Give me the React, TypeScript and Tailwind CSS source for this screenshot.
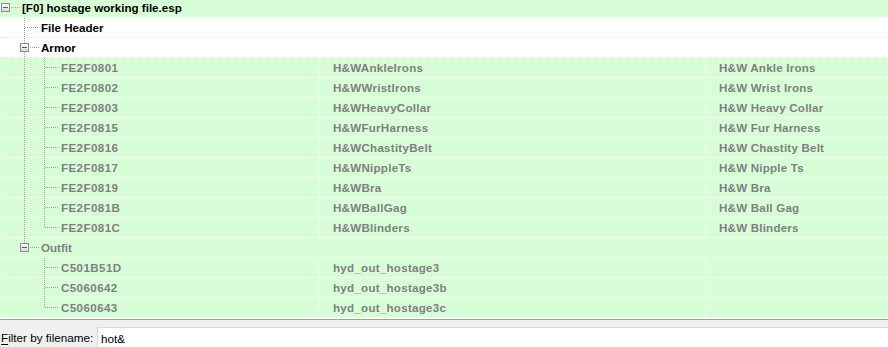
import React from "react";

type Row = {
  depth: 0 | 1 | 2;
  box?: boolean;
  label: string;
  edid?: string;
  full?: string;
  tone: "green" | "white";
  muted?: boolean;
  under?: boolean; // depth-1 line at x=24 continues through this row
  last?: boolean;
};

const rows: Row[] = [
  { depth: 0, box: true, label: "[F0] hostage working file.esp", tone: "green" },
  { depth: 1, label: "File Header", tone: "white" },
  { depth: 1, box: true, label: "Armor", tone: "white" },
  { depth: 2, label: "FE2F0801", edid: "H&WAnkleIrons", full: "H&W Ankle Irons", tone: "green", muted: true, under: true },
  { depth: 2, label: "FE2F0802", edid: "H&WWristIrons", full: "H&W Wrist Irons", tone: "green", muted: true, under: true },
  { depth: 2, label: "FE2F0803", edid: "H&WHeavyCollar", full: "H&W Heavy Collar", tone: "green", muted: true, under: true },
  { depth: 2, label: "FE2F0815", edid: "H&WFurHarness", full: "H&W Fur Harness", tone: "green", muted: true, under: true },
  { depth: 2, label: "FE2F0816", edid: "H&WChastityBelt", full: "H&W Chastity Belt", tone: "green", muted: true, under: true },
  { depth: 2, label: "FE2F0817", edid: "H&WNippleTs", full: "H&W Nipple Ts", tone: "green", muted: true, under: true },
  { depth: 2, label: "FE2F0819", edid: "H&WBra", full: "H&W Bra", tone: "green", muted: true, under: true },
  { depth: 2, label: "FE2F081B", edid: "H&WBallGag", full: "H&W Ball Gag", tone: "green", muted: true, under: true },
  { depth: 2, label: "FE2F081C", edid: "H&WBlinders", full: "H&W Blinders", tone: "green", muted: true, under: true, last: true },
  { depth: 1, box: true, label: "Outfit", tone: "green", muted: true, last: true },
  { depth: 2, label: "C501B51D", edid: "hyd_out_hostage3", tone: "green", muted: true },
  { depth: 2, label: "C5060642", edid: "hyd_out_hostage3b", tone: "green", muted: true },
  { depth: 2, label: "C5060643", edid: "hyd_out_hostage3c", tone: "green", muted: true, last: true },
];

const dot = { stroke: "#a0a0a0", strokeWidth: 1, strokeDasharray: "1 1" };

function Expander({ x }: { x: number }) {
  return (
    <g>
      <rect x={x + 0.5} y={5.5} width={8} height={8} fill="url(#btn)" stroke="#8e8f8f" />
      <line x1={x + 2} y1={9.5} x2={x + 7} y2={9.5} stroke="#3b5a9e" strokeWidth={1} />
    </g>
  );
}

function Guides({ row }: { row: Row }) {
  const w = row.depth === 0 ? 21 : row.depth === 1 ? 40 : 60;
  return (
    <svg width={w} height={19} className="shrink-0">
      <defs>
        <linearGradient id="btn" x1="0" y1="0" x2="0" y2="1">
          <stop offset="0" stopColor="#ffffff" />
          <stop offset="1" stopColor="#d8d8d8" />
        </linearGradient>
      </defs>
      {row.depth === 0 && (
        <>
          <line x1={11} y1={9.5} x2={21} y2={9.5} {...dot} />
          <Expander x={1} />
        </>
      )}
      {row.depth === 1 && (
        <>
          <line x1={24.5} y1={0} x2={24.5} y2={row.last ? 10 : 19} {...dot} />
          <line x1={row.box ? 30 : 25} y1={9.5} x2={39} y2={9.5} {...dot} />
          {row.box && <Expander x={20} />}
        </>
      )}
      {row.depth === 2 && (
        <>
          {row.under && <line x1={24.5} y1={0} x2={24.5} y2={19} {...dot} />}
          <line x1={44.5} y1={0} x2={44.5} y2={row.last ? 10 : 19} {...dot} />
          <line x1={45} y1={9.5} x2={59} y2={9.5} {...dot} />
        </>
      )}
    </svg>
  );
}

function TreeRow({ row }: { row: Row }) {
  const bg = row.tone === "green" ? "bg-[#d7fed7] border-white" : "bg-white border-[#e6e6e6]";
  const color = row.muted ? "text-[#808080]" : "text-black";
  if (row.depth < 2) {
    return (
      <div className={`flex h-[20px] items-center border-b border-dotted ${bg}`}>
        <Guides row={row} />
        <span className={`ml-px whitespace-nowrap font-bold ${color}`}>{row.label}</span>
      </div>
    );
  }
  return (
    <div className={`flex h-[20px] items-stretch border-b border-dotted ${bg}`}>
      <div className="flex w-[319px] shrink-0 items-center">
        <Guides row={row} />
        <span className={`ml-px font-bold tracking-[0.4px] ${color}`}>{row.label}</span>
      </div>
      <div className={`flex w-[386px] shrink-0 items-center border-l border-dotted border-white pl-[13px] font-bold tracking-[0.25px] ${color}`}>
        {row.edid}
      </div>
      <div className={`flex flex-1 items-center border-l border-dotted border-white pl-[13px] font-bold tracking-[0.2px] ${color}`}>
        {row.full}
      </div>
    </div>
  );
}

export default function App() {
  return (
    <div className="flex h-[347px] w-[888px] flex-col overflow-hidden bg-white text-[11.6px] leading-none font-['Liberation_Sans',Arial,sans-serif]">
      <div className="h-[320px] shrink-0 overflow-hidden border-b border-[#a0a0a0] bg-white">
        <div className="-mt-[2px]">
          {rows.map((row) => (
            <TreeRow key={row.label} row={row} />
          ))}
        </div>
      </div>
      <div className="flex flex-1 bg-[#f0f0f0] pt-[7px]">
        <label className="flex h-[22px] w-[97px] shrink-0 items-center pl-px text-[11.7px] text-black">
          <span className="underline underline-offset-2">F</span>ilter by filename:
        </label>
        <div className="flex h-[22px] flex-1 items-center border-l border-t border-[#d9d9d9] bg-white pl-[3px] text-[11.7px] text-black">
          hot&amp;
        </div>
      </div>
    </div>
  );
}
